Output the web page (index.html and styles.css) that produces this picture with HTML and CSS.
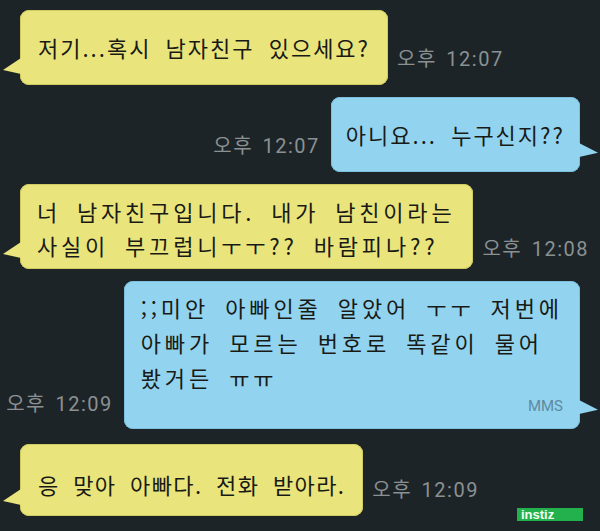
FILE: index.html
```html
<!DOCTYPE html>
<html lang="ko">
<head>
    <meta charset="UTF-8">
    <meta name="viewport" content="width=device-width, initial-scale=1.0">
    <title>대화</title>
    <link rel="stylesheet" href="styles.css">
</head>
<body>
    <div class="chat">

        <div class="row left first">
            <div class="bubble yellow">저기...혹시 남자친구 있으세요?</div>
            <span class="time">오후 12:07</span>
        </div>

        <div class="row right second">
            <span class="time">오후 12:07</span>
            <div class="bubble blue">아니요... 누구신지??</div>
        </div>

        <div class="row left third">
            <div class="bubble yellow">너 남자친구입니다. 내가 남친이라는<br>사실이 부끄럽니ㅜㅜ?? 바람피나??</div>
            <span class="time">오후 12:08</span>
        </div>

        <div class="row right fourth">
            <span class="time">오후 12:09</span>
            <div class="bubble blue">
                ;;미안 아빠인줄 알았어 ㅜㅜ 저번에<br>아빠가 모르는 번호로 똑같이 물어<br>봤거든 ㅠㅠ
                <div class="mms">MMS</div>
            </div>
        </div>

        <div class="row left fifth">
            <div class="bubble yellow">응 맞아 아빠다. 전화 받아라.</div>
            <span class="time">오후 12:09</span>
        </div>

    </div>

    <div class="logo">instiz</div>
</body>
</html>
```

FILE: styles.css
```css
body {
    margin: 0;
    padding: 0;
    background: #1d2427;
    font-family: "Noto Sans CJK KR", "Noto Sans", sans-serif;
    height: 531px;
    overflow: hidden;
    position: relative;
}

.chat {
    display: flex;
    flex-direction: column;
    gap: 12px;
    padding: 10px 20px 0 20px;
}

.row {
    display: flex;
    align-items: flex-end;
}

.row.left {
    justify-content: flex-start;
    gap: 9px;
}

.row.right {
    justify-content: flex-end;
    gap: 11px;
}

.bubble {
    position: relative;
    color: #191a15;
    font-size: 22px;
    line-height: 35px;
    letter-spacing: 2px;
    word-spacing: 6px;
    white-space: nowrap;
    border-radius: 9px;
    padding: 20px 18px;
}

.yellow {
    background: #e9e57c;
    box-shadow: inset 0 0 0 1px #cfcb5e;
}

.blue {
    background: #92d4f0;
    box-shadow: inset 0 0 0 1px #7dbfdc;
    padding: 20px 15px;
}

/* tails */
.yellow::before {
    content: "";
    position: absolute;
    left: -17px;
    bottom: 11px;
    width: 18px;
    height: 16px;
    background: #e9e57c;
    clip-path: polygon(100% 0, 0 75%, 100% 100%);
}

.blue::after {
    content: "";
    position: absolute;
    right: -18px;
    bottom: 15px;
    width: 19px;
    height: 14px;
    background: #92d4f0;
    clip-path: polygon(0 0, 100% 70%, 0 100%);
}

.time {
    color: #8b9193;
    font-family: Roboto, "Noto Sans CJK KR", sans-serif;
    font-size: 20px;
    line-height: 20px;
    letter-spacing: 1.5px;
    word-spacing: 3px;
    white-space: nowrap;
    margin-bottom: 16px;
}

.third .bubble {
    line-height: 34px;
    letter-spacing: 3.8px;
    padding: 10px 18px 7px 17px;
}

.third .time {
    margin-bottom: 10px;
}

.fourth {
    gap: 18px;
}

.fourth .bubble {
    letter-spacing: 3.9px;
    padding: 9px 17px 13px 17px;
}

.fourth .time {
    margin-bottom: 15px;
}

.mms {
    text-align: right;
    font-family: Roboto, sans-serif;
    font-size: 15px;
    line-height: 20px;
    letter-spacing: 0;
    color: #5f8aa0;
    margin-top: 1px;
}

.fifth {
    margin-top: 3px;
}

.fifth .bubble {
    line-height: 36px;
    letter-spacing: 1.4px;
    padding: 22px 18px 14px 18px;
}

.logo {
    position: absolute;
    left: 517px;
    top: 508px;
    width: 62px;
    height: 13px;
    padding-left: 4px;
    background: #22b14c;
    color: #f4fff4;
    font-family: "Liberation Sans", Arial, sans-serif;
    font-weight: bold;
    font-size: 13px;
    line-height: 13px;
}
```
